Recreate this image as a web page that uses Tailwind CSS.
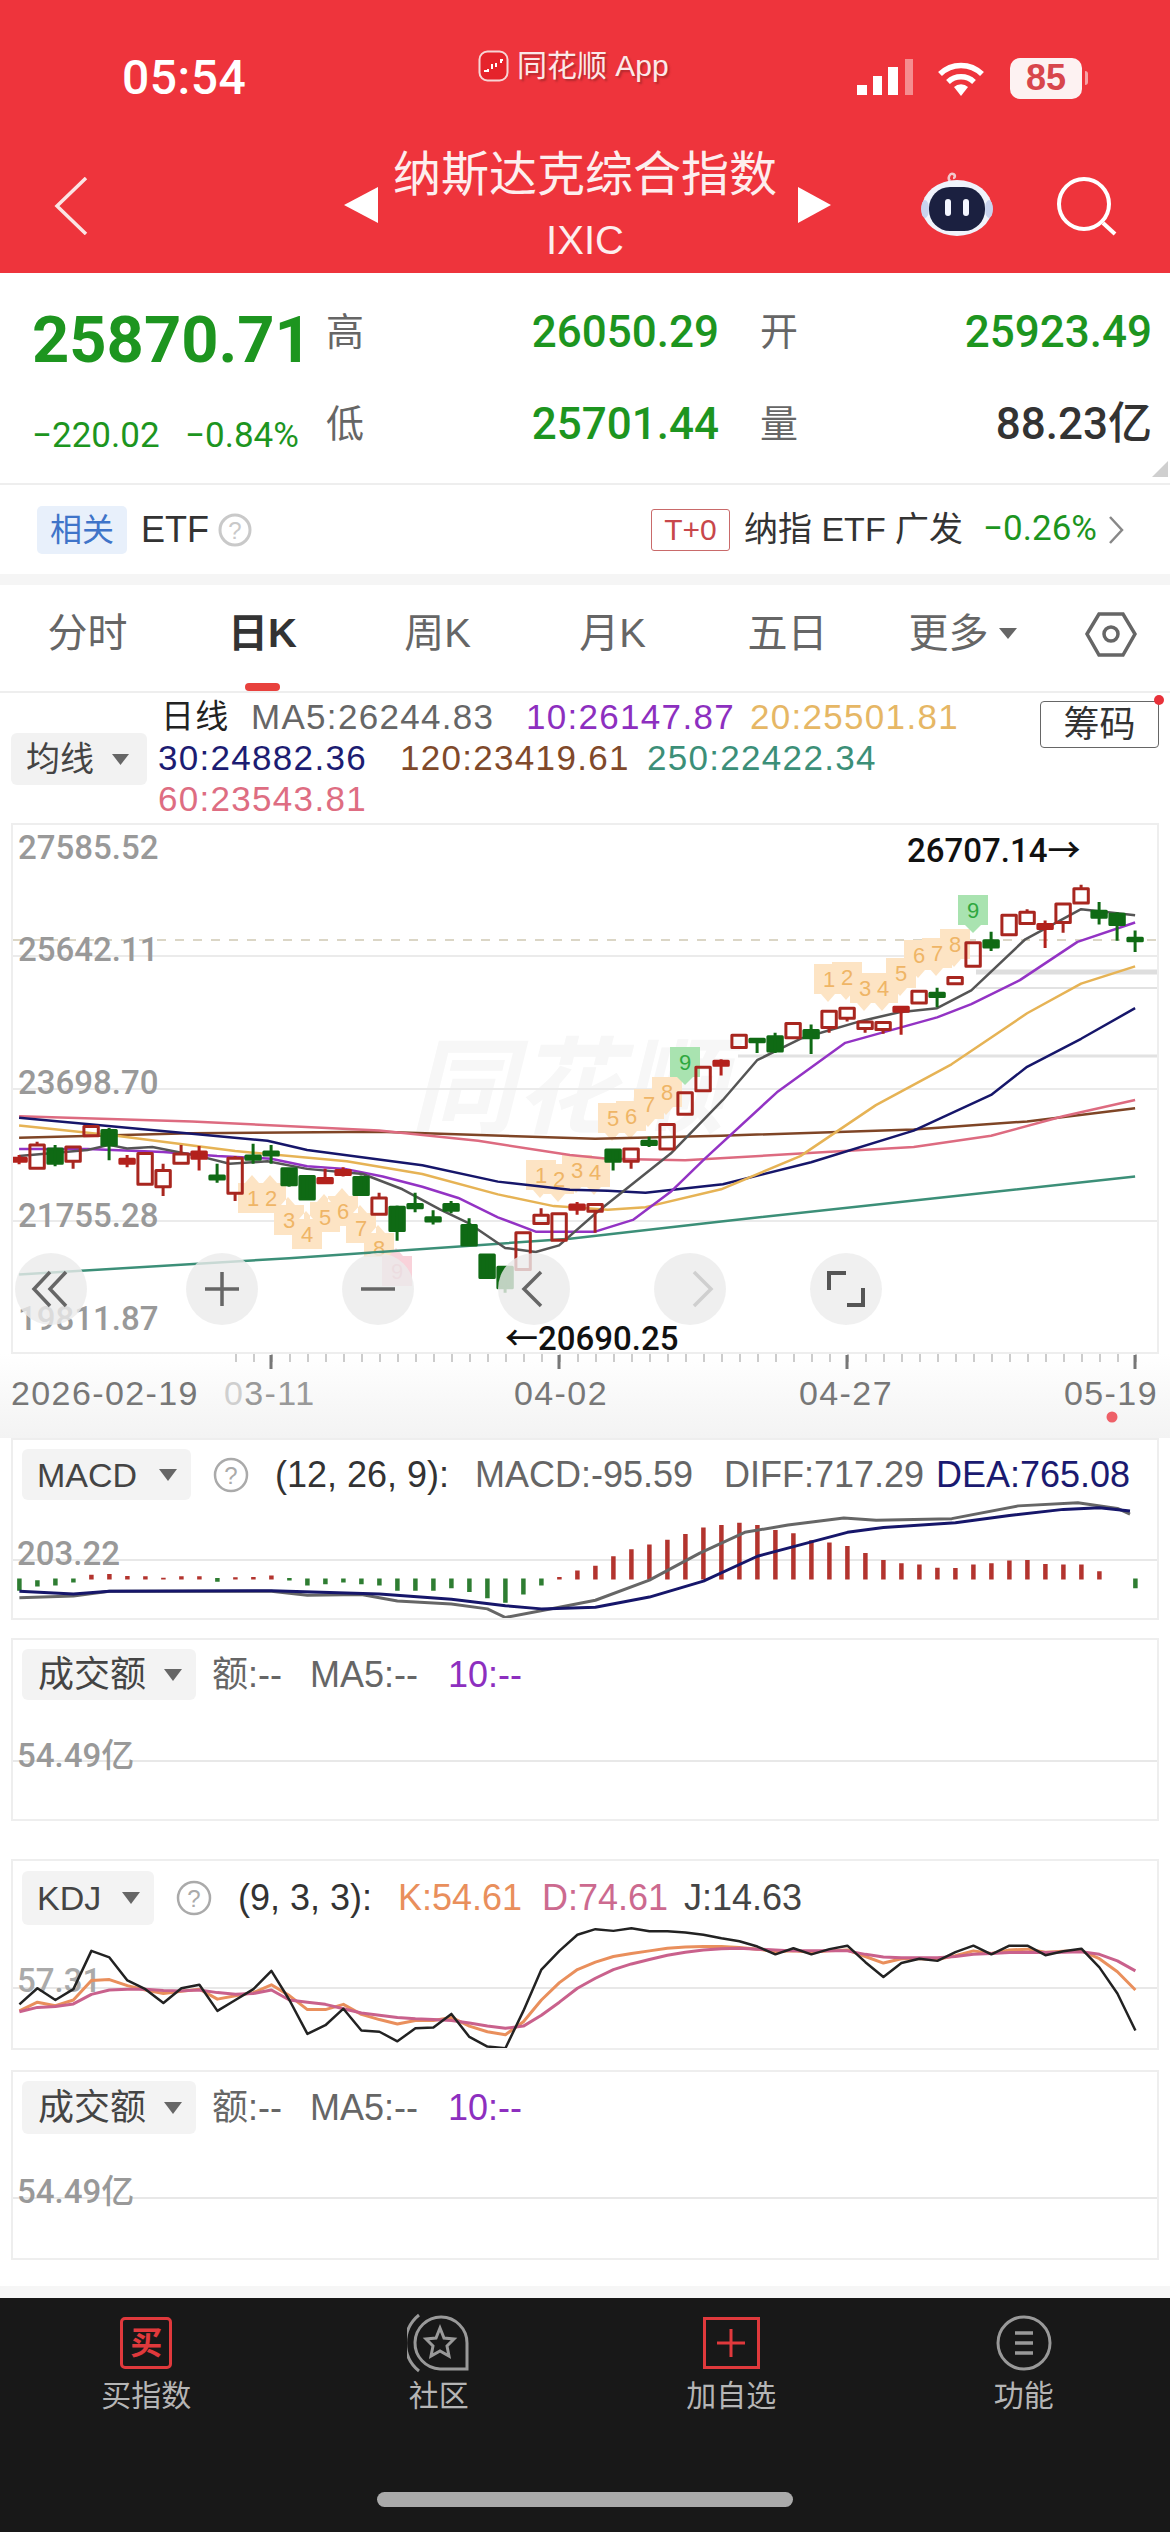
<!DOCTYPE html>
<html lang="zh">
<head>
<meta charset="utf-8">
<title>纳斯达克综合指数</title>
<script src="https://cdn.jsdelivr.net/npm/@tailwindcss/browser@4"></script>
</head>
<body class="bg-white">
<div class="w-[1170px] h-[2532px] overflow-hidden flex flex-col bg-white font-['Liberation_Sans','Noto_Sans_CJK_SC',sans-serif] text-[#333]">

  <!-- red header -->
  <header class="h-[273px] shrink-0 bg-[#ee343c] text-white flex flex-col">
    <div class="h-[116px] pt-[40px] flex items-center pl-[122px]">
      <div class="w-[356px] text-[48px] leading-none font-['Roboto',sans-serif] font-medium tracking-[0.5px]">05:54</div>
      <div class="w-[379px] flex items-center mb-[24px]">
        <svg class="w-[31px] h-[32px]" viewBox="0 0 31 32"><rect x="1.5" y="1.5" width="28" height="29" rx="8" fill="#e5232b" stroke="#f7d5d5" stroke-width="2"/><path d="M6 21h3M10 19v3M14 14v5M18 13v4M23 9v4M25 10h-3" stroke="#fff" stroke-width="2" fill="none"/></svg>
        <span class="ml-[8px] text-[30px] leading-none text-[#fbe9e9] [text-shadow:2px_2px_2px_rgba(110,30,30,0.45)]">同花顺 App</span>
      </div>
      <svg class="w-[60px] h-[40px] mt-[0px]" viewBox="857 58 60 40"><path d="M857 85h10v10h-10zM873 76h9v19h-9zM888 67h10v28h-10z" fill="#fff"/><rect x="905" y="59" width="8" height="36" fill="#f58d90"/></svg>
      <svg class="ml-[20px] w-[48px] h-[37px]" viewBox="0 0 48 37" fill="none" stroke="#fff" stroke-width="5.5"><path d="M3 14A30 30 0 0 1 45 14"/><path d="M11 22A19 19 0 0 1 37 22"/><path d="M24 36L17 27A10 10 0 0 1 31 27Z" fill="#fff" stroke="none"/></svg>
      <div class="ml-[25px] w-[72px] h-[41px] bg-[#fdf2f2] rounded-[10px] flex items-center justify-center text-[#d8464c] text-[36px] leading-none font-bold">85</div>
      <div class="ml-[3px] w-[3px] h-[14px] bg-[#f7a3a6] rounded-r-sm"></div>
    </div>
    <div class="h-[157px] flex items-start pl-[54px]">
      <svg class="mt-[61px] w-[34px] h-[58px]" viewBox="0 0 34 58" fill="none" stroke="#fbe4e4" stroke-width="3.5"><path d="M32 1L3 29L32 57"/></svg>
      <svg class="ml-[256px] mt-[71px] w-[34px] h-[36px]" viewBox="0 0 34 36"><path d="M34 0V36L0 18Z" fill="#fff"/></svg>
      <div class="w-[420px] mt-[30px] flex flex-col items-center pr-[6px]">
        <div class="text-[48px] leading-[58px] text-[#fdeeee] whitespace-nowrap">纳斯达克综合指数</div>
        <div class="mt-[11px] text-[40px] leading-[50px] text-[#fdeeee]">IXIC</div>
      </div>
      <svg class="mt-[71px] w-[33px] h-[36px]" viewBox="0 0 33 36"><path d="M0 0V36L33 18Z" fill="#fff"/></svg>
      <svg class="ml-[90px] mt-[55px] w-[72px] h-[66px]" viewBox="0 0 72 66"><path d="M29 10c-3-3 0-8 3-7 3 1 2 4 0 4" fill="none" stroke="#f2c8cc" stroke-width="2.5"/><ellipse cx="36" cy="37" rx="35" ry="28" fill="#f0f3fb"/><ellipse cx="4" cy="38" rx="4" ry="9" fill="#c9d3ee"/><ellipse cx="68" cy="38" rx="4" ry="9" fill="#c9d3ee"/><rect x="8" y="16" width="56" height="44" rx="21" fill="#1b2040"/><rect x="24" y="28" width="6" height="17" rx="3" fill="#f4f6ff"/><rect x="42" y="28" width="6" height="17" rx="3" fill="#f4f6ff"/></svg>
      <svg class="ml-[64px] mt-[60px] w-[60px] h-[60px]" viewBox="0 0 60 60" fill="none" stroke="#fff" stroke-width="4"><circle cx="27" cy="28" r="25"/><path d="M46 47L58 58"/></svg>
    </div>
  </header>

  <!-- quote -->
  <section class="h-[212px] shrink-0 relative flex border-b-2 border-[#eeeeee] font-['Roboto','Noto_Sans_CJK_SC',sans-serif]">
    <div class="w-[326px] pl-[32px] shrink-0 text-[#1d951f]">
      <div class="mt-[34px] text-[65px] leading-[66px] font-bold whitespace-nowrap">25870.71</div>
      <div class="mt-[43px] text-[35px] leading-[40px] flex whitespace-nowrap">
        <span class="w-[153px]">−220.02</span><span>−0.84%</span>
      </div>
    </div>
    <div class="flex-1">
      <div class="mt-[34px] h-[50px] flex items-center">
        <span class="w-[40px] text-[38px] text-[#666] font-['Liberation_Sans','Noto_Sans_CJK_SC',sans-serif]">高</span>
        <span class="w-[353px] text-right text-[44px] font-medium text-[#1d951f]">26050.29</span>
        <span class="ml-[41px] w-[40px] text-[38px] text-[#666] font-['Liberation_Sans','Noto_Sans_CJK_SC',sans-serif]">开</span>
        <span class="w-[352px] text-right text-[44px] font-medium text-[#1d951f]">25923.49</span>
      </div>
      <div class="mt-[42px] h-[50px] flex items-center">
        <span class="w-[40px] text-[38px] text-[#666] font-['Liberation_Sans','Noto_Sans_CJK_SC',sans-serif]">低</span>
        <span class="w-[353px] text-right text-[44px] font-medium text-[#1d951f]">25701.44</span>
        <span class="ml-[41px] w-[40px] text-[38px] text-[#666] font-['Liberation_Sans','Noto_Sans_CJK_SC',sans-serif]">量</span>
        <span class="w-[352px] text-right text-[44px] font-medium text-[#333]">88.23亿</span>
      </div>
    </div>
    <svg class="absolute right-[2px] bottom-[6px] w-[16px] h-[16px]" viewBox="0 0 16 16"><path d="M16 0V16H0Z" fill="#cfcfcf"/></svg>
  </section>

  <!-- ETF row -->
  <section class="h-[89px] shrink-0 flex items-center pl-[37px] pr-[46px]">
    <div class="w-[90px] h-[48px] bg-[#e8f0fb] rounded-[5px] flex items-center justify-center text-[32px] text-[#3f74c9]">相关</div>
    <span class="ml-[14px] text-[36px] text-[#333]">ETF</span>
    <svg class="ml-[9px] w-[34px] h-[34px]" viewBox="0 0 34 34"><circle cx="17" cy="17" r="15" fill="none" stroke="#c9c9c9" stroke-width="3"/><text x="17" y="26" text-anchor="middle" font-size="24" fill="#c9c9c9">?</text></svg>
    <div class="ml-auto w-[79px] h-[42px] border border-[#c96a6a] rounded-[3px] flex items-center justify-center text-[30px] text-[#c8474b]">T+0</div>
    <span class="ml-[14px] text-[34px] text-[#333] whitespace-nowrap">纳指 ETF 广发</span>
    <span class="ml-[20px] text-[35px] text-[#1d951f] font-['Roboto',sans-serif]">−0.26%</span>
    <svg class="ml-[11px] w-[16px] h-[30px]" viewBox="0 0 16 30" fill="none" stroke="#888" stroke-width="2.5"><path d="M2 2L14 15L2 28"/></svg>
  </section>
  <div class="h-[11px] shrink-0 bg-[#f5f5f5]"></div>

  <!-- tabs -->
  <nav class="h-[108px] shrink-0 flex items-center border-b-2 border-[#eeeeee] relative text-[40px] text-[#666] pb-[10px]">
    <div class="w-[175px] text-center">分时</div>
    <div class="w-[175px] text-center text-[#333] font-bold relative">日K</div>
    <div class="w-[175px] text-center">周K</div>
    <div class="w-[175px] text-center">月K</div>
    <div class="w-[175px] text-center">五日</div>
    <div class="w-[175px] flex items-center justify-center pl-[0px]">更多<svg class="ml-[10px] w-[18px] h-[11px]" viewBox="0 0 18 11"><path d="M0 0H18L9 11Z" fill="#666"/></svg></div>
    <svg class="ml-[35px] w-[52px] h-[45px] mt-[2px]" viewBox="0 0 52 45" fill="none" stroke="#666" stroke-width="3.5"><path d="M2 22L14 2H38L50 22L38 43H14Z"/><circle cx="26" cy="22" r="7"/></svg>
    <div class="absolute left-[245px] bottom-[0px] w-[35px] h-[8px] rounded-full bg-[#e8413d]"></div>
  </nav>

  <!-- legends -->
  <section class="h-[130px] shrink-0 relative flex">
    <div class="ml-[11px] mt-[40px] w-[136px] h-[52px] bg-[#f2f2f2] rounded-md flex items-center pl-[15px] text-[34px] text-[#444]">均线<svg class="ml-[18px] w-[17px] h-[11px]" viewBox="0 0 17 11"><path d="M0 0H17L8.5 11Z" fill="#666"/></svg></div>
    <div class="ml-[11px] text-[35px] leading-[41px] tracking-[1.3px] pt-[3px]">
      <div class="flex whitespace-nowrap">
        <span class="w-[93px] text-[33px] text-[#222] pl-[3px]">日线</span>
        <span class="w-[275px] text-[#666]">MA5:26244.83</span>
        <span class="w-[224px] text-[#8d2fbf]">10:26147.87</span>
        <span class="text-[#e6b765]">20:25501.81</span>
      </div>
      <div class="flex whitespace-nowrap">
        <span class="w-[242px] text-[#1c1c72]">30:24882.36</span>
        <span class="w-[247px] text-[#80492a]">120:23419.61</span>
        <span class="text-[#3c8f78]">250:22422.34</span>
      </div>
      <div class="text-[#de6d82] whitespace-nowrap">60:23543.81</div>
    </div>
    <div class="absolute left-[1040px] top-[8px] w-[119px] h-[47px] border border-[#666] rounded-[4px] flex items-center justify-center text-[36px] text-[#333]">筹码</div>
    <div class="absolute left-[1154px] top-[2px] w-[10px] h-[10px] rounded-full bg-[#e8313a]"></div>
  </section>

  <!-- main chart -->
  <section class="mx-[11px] h-[531px] shrink-0 relative border-2 border-[#eeeeee]">
    <svg class="absolute left-0 top-0 w-[1144px] h-[527px]" viewBox="13 825 1144 527" font-family="Roboto, 'Noto Sans CJK SC', sans-serif" font-weight="500">
      <text x="410" y="1125" font-size="105" font-weight="700" font-style="italic" fill="#f7f7f7">同花顺</text>
      <g stroke="#ebebeb" stroke-width="2"><path d="M13 956H1157M13 1089H1157M13 1221H1157"/></g>
      <path d="M13 940H1157" stroke="#cfc9b4" stroke-width="1.5" stroke-dasharray="9 9"/>
      <path d="M976 972H1157" stroke="#dedede" stroke-width="5"/>
      <path d="M976 988H1157" stroke="#e2e2e2" stroke-width="2"/>
      <path d="M738 1056H1157" stroke="#e2e2e2" stroke-width="3"/>

      <g fill="#999">
        <text x="18" y="859" font-size="33">27585.52</text>
        <text x="18" y="961" font-size="33">25642.11</text>
        <text x="18" y="1094" font-size="33">23698.70</text>
        <text x="18" y="1227" font-size="33">21755.28</text>
        <text x="18" y="1330" font-size="33">19811.87</text>
      </g>

      <!-- sequence badges -->
      <path fill="#fde4c4" d="M238 1183h30v30h-30zM245 1183h14l-7-8zM256 1183h30v30h-30zM263 1183h14l-7-8zM274 1205h30v30h-30zM281 1205h14l-7-8zM292 1219h30v30h-30zM299 1219h14l-7-8zM310 1202h30v30h-30zM317 1202h14l-7-8zM328 1196h30v30h-30zM335 1196h14l-7-8zM346 1213h30v30h-30zM353 1213h14l-7-8zM364 1233h30v24h-30zM371 1233h14l-7-8z"/>
      <path fill="#fde4c4" d="M526 1160h30v30h-30zM533 1190h14l-7 8zM544 1164h30v30h-30zM551 1194h14l-7 8zM562 1155h30v30h-30zM569 1185h14l-7 8zM580 1157h30v30h-30zM587 1187h14l-7 8zM598 1103h30v30h-30zM605 1133h14l-7 8zM616 1101h30v30h-30zM623 1131h14l-7 8zM634 1089h30v30h-30zM641 1119h14l-7 8zM652 1077h30v30h-30zM659 1107h14l-7 8z"/>
      <path fill="#fde4c4" d="M814 964h30v30h-30zM821 994h14l-7 8zM832 962h30v30h-30zM839 992h14l-7 8zM850 973h30v30h-30zM857 1003h14l-7 8zM868 973h30v30h-30zM875 1003h14l-7 8zM886 958h30v30h-30zM893 988h14l-7 8zM904 940h30v30h-30zM911 970h14l-7 8zM922 938h30v30h-30zM929 968h14l-7 8zM940 929h30v30h-30zM947 959h14l-7 8z"/>
      <path fill="#f9d2da" d="M382 1256h30v30h-30zM389 1256h14l-7-8z"/>
      <path fill="#a9e3b0" d="M670 1047h30v30h-30zM677 1077h16l-8 8zM958 895h30v30h-30zM965 925h16l-8 8z"/>
      <g fill="#efb566" font-size="22" text-anchor="middle" font-family="'Liberation Sans', sans-serif" font-weight="400">
        <text x="253" y="1206">1</text><text x="271" y="1206">2</text><text x="289" y="1228">3</text><text x="307" y="1242">4</text><text x="325" y="1225">5</text><text x="343" y="1219">6</text><text x="361" y="1236">7</text><text x="379" y="1256">8</text>
        <text x="541" y="1183">1</text><text x="559" y="1187">2</text><text x="577" y="1178">3</text><text x="595" y="1180">4</text><text x="613" y="1126">5</text><text x="631" y="1124">6</text><text x="649" y="1112">7</text><text x="667" y="1100">8</text>
        <text x="829" y="987">1</text><text x="847" y="985">2</text><text x="865" y="996">3</text><text x="883" y="996">4</text><text x="901" y="981">5</text><text x="919" y="963">6</text><text x="937" y="961">7</text><text x="955" y="952">8</text>
        <text x="397" y="1279" fill="#ee9fb0">9</text><text x="685" y="1070" fill="#2fa83f">9</text><text x="973" y="918" fill="#2fa83f">9</text>
      </g>

      <g transform="translate(19.1 600) scale(18 .5102)" fill="none" stroke-linejoin="round">
        <polyline vector-effect="non-scaling-stroke" stroke="#3c8f78" stroke-width="2.5" points="0,1322 15,1290 30.6,1252 39,1218 51,1172 62,1130"/>
        <polyline vector-effect="non-scaling-stroke" stroke="#7f4526" stroke-width="2.5" points="0,1054 9.5,1045 20,1042 32,1056 39,1050 49.7,1038 56,1022 62,996"/>
        <polyline vector-effect="non-scaling-stroke" stroke="#dd6b80" stroke-width="2.5" points="0,1012 9.6,1022 20,1040 25.5,1060 30.6,1088 32.7,1095 37,1098 43.4,1085 49.7,1072 54,1050 58,1012 62,980"/>
        <polyline vector-effect="non-scaling-stroke" stroke="#16166a" stroke-width="2.5" points="0,1015 9.6,1046 13.8,1060 16,1078 22.4,1108 26.6,1140 30.6,1156 32.7,1158 34.8,1162 39.1,1145 44,1102 49.7,1040 54,970 56,915 59,860 62,800"/>
        <polyline vector-effect="non-scaling-stroke" stroke="#e6b355" stroke-width="2.5" points="0,1030 5.4,1050 12,1080 18.2,1100 22.4,1125 26.6,1165 29.7,1188 32.7,1195 34.8,1190 39,1155 43.4,1090 45.5,1040 47.6,990 51.8,910 56,810 59,752 62,718"/>
        <polyline vector-effect="non-scaling-stroke" stroke="#9333c4" stroke-width="2.5" points="0,1076 3.8,1076 8,1082 11,1090 14,1095 16,1110 18.1,1115 20.2,1130 22.4,1150 24.4,1172 26.6,1210 28.7,1238 32,1238 34.1,1215 36.2,1160 38.1,1095 42.1,965 45.9,868 51,818 52.9,792 55.6,745 58.8,670 62,632"/>
        <polyline vector-effect="non-scaling-stroke" stroke="#555" stroke-width="2.5" points="0,1090 3.8,1078 5,1068 6,1075 7.4,1072 10,1090 11.7,1105 13.8,1100 16,1115 19.1,1125 21.3,1155 23.4,1195 25,1222 27,1270 28.7,1278 30,1265 32.1,1200 36.2,1085 39.1,980 41,902 43.4,860 46.8,825 48.9,808 51,800 52.9,765 55.9,665 59,606 62,618"/>

        <!-- hollow red candles -->
        <path vector-effect="non-scaling-stroke" stroke="#a8261f" stroke-width="3" d="M1 1062V1068M.6 1068H1.4V1114H.6ZM2.6 1072H3.4V1100H2.6ZM3 1100V1115M3.6 1032H4.4V1050H3.6ZM6.6 1085H7.4V1145H6.6ZM8 1105V1118M7.6 1118H8.4V1150H7.6ZM8 1150V1168M9 1068V1086M8.6 1086H9.4V1104H8.6ZM12 1090V1094M11.6 1094H12.4V1163H11.6ZM12 1163V1178M20 1162V1172M19.6 1172H20.4V1204H19.6ZM27.6 1240H28.4V1312H27.6ZM29 1192V1206M28.6 1206H29.4V1222H28.6ZM29.6 1203H30.4V1255H29.6ZM31.6 1185H32.4V1198H31.6ZM32 1198V1240M33.6 1076H34.4V1100H33.6ZM34 1100V1115M35.6 1028H36.4V1076H35.6ZM36.6 966H37.4V1008H36.6ZM37.6 916H38.4V962H37.6ZM39.6 853H40.4V877H39.6ZM42.6 830H43.4V858H42.6ZM44.6 806H45.4V838H44.6ZM45 838V848M45.6 800H46.4V820H45.6ZM46 820V826M46.6 827H47.4V840H46.6ZM47 840V848M47.6 828H48.4V842H47.6ZM48 842V850M49.6 767H50.4V790H49.6ZM51.6 740H52.4V752H51.6ZM52.6 672H53.4V718H52.6ZM54.6 618H55.4V656H54.6ZM55.6 612H56.4V634H55.6ZM56 606V612M57.6 596H58.4V632H57.6ZM58 632V652M58.6 566H59.4V594H58.6ZM59 558V566"/>
        <!-- filled red -->
        <path vector-effect="non-scaling-stroke" stroke="#b3211c" stroke-width="3" fill="#b3211c" d="M0 1088V1106M-.4 1094H.4V1100H-.4ZM10 1070V1118M9.6 1082H10.4V1094H9.6ZM6 1088V1112M5.6 1096H6.4V1104H5.6ZM17 1115V1145M16.6 1134H17.4V1142H16.6ZM18 1112V1130M17.6 1118H18.4V1126H17.6ZM31 1180V1205M30.6 1186H31.4V1194H30.6ZM39 900V932M38.6 904H39.4V912H38.6ZM49 796V852M48.6 798H49.4V806H48.6ZM57 628V682M56.6 636H57.4V644H56.6Z"/>
        <!-- green -->
        <path vector-effect="non-scaling-stroke" stroke="#0f6a14" stroke-width="3" fill="#0f6a14" d="M2 1068V1110M1.6 1076H2.4V1104H1.6ZM5 1035V1098M4.6 1040H5.4V1068H4.6ZM15 1112V1150M14.6 1115H15.4V1146H14.6ZM16 1128V1176M15.6 1130H16.4V1174H15.6ZM19 1128V1168M18.6 1132H19.4V1165H18.6ZM21 1187V1256M20.6 1190H21.4V1236H20.6ZM24 1178V1202M23.6 1185H24.4V1196H23.6ZM25 1212V1265M24.6 1226H25.4V1264H24.6ZM26 1282V1330M25.6 1284H26.4V1328H25.6ZM27 1305V1358M26.6 1308H27.4V1348H26.6ZM33 1076V1118M32.6 1078H33.4V1100H32.6ZM42 848V888M41.6 856H42.4V884H41.6ZM44 832V890M43.6 844H44.4V858H43.6ZM60 592V636M59.6 610H60.4V622H59.6ZM61 612V668M60.6 616H61.4V636H60.6ZM11 1105V1142M10.6 1129H11.4V1135H10.6ZM13 1066V1105M12.6 1090H13.4V1096H12.6ZM14 1068V1105M13.6 1082H14.4V1088H13.6ZM22 1162V1200M21.6 1185H22.4V1191H21.6ZM23 1196V1224M22.6 1211H23.4V1217H22.6ZM35 1052V1072M34.6 1061H35.4V1067H34.6ZM41 860V888M40.6 861H41.4V866H40.6ZM51 760V798M50.6 771H51.4V777H50.6ZM54 650V688M53.6 668H54.4V680H53.6ZM62 648V690M61.6 663H62.4V668H61.6Z"/>
      </g>

      <!-- floating buttons -->
      <g fill="#ececec" opacity=".8"><circle cx="51" cy="1289" r="36"/><circle cx="222" cy="1289" r="36"/><circle cx="378" cy="1289" r="36"/><circle cx="534" cy="1289" r="36"/><circle cx="690" cy="1289" r="36"/><circle cx="846" cy="1289" r="36"/></g>
      <g fill="none" stroke="#666" stroke-width="3.5">
        <path d="M50 1272L34 1289L50 1306M66 1272L50 1289L66 1306"/>
        <path d="M205 1289H239M222 1272V1306"/>
        <path d="M361 1289H395"/>
        <path d="M541 1272L524 1289L541 1306"/>
        <path d="M694 1272L711 1289L694 1306" stroke="#cfcfcf"/>
        <path d="M829 1290V1273H846M863 1288V1305H847" stroke="#555" stroke-width="4"/>
      </g>
      <g fill="#111" font-size="33">
        <text x="907" y="862">26707.14→</text>
        <text x="505" y="1350">←20690.25</text>
      </g>
    </svg>
  </section>

  <!-- date axis -->
  <section class="h-[84px] shrink-0 relative bg-gradient-to-b from-white to-[#f3f3f3]">
    <svg class="absolute left-0 top-0 w-[1170px] h-[84px]" viewBox="0 1354 1170 84" font-family="'Liberation Sans', sans-serif">
      <path d="M235 1358H1137" stroke="#cccccc" stroke-width="8" stroke-dasharray="2 16"/>
      <path d="M271 1355V1369M559 1355V1369M847 1355V1369M1135 1355V1369" stroke="#777" stroke-width="3"/>
      <g fill="#777" font-size="34" letter-spacing="1.4">
        <text x="11" y="1405">2026-02-19</text>
        <text x="224" y="1405"><tspan fill="#cfcfcf">0</tspan><tspan fill="#999">3-11</tspan></text>
        <text x="514" y="1405">04-02</text>
        <text x="799" y="1405">04-27</text>
        <text x="1064" y="1405">05-19</text>
      </g>
      <circle cx="1112" cy="1417" r="5.5" fill="#ee6068"/>
    </svg>
  </section>

  <!-- MACD -->
  <section class="mx-[11px] h-[182px] shrink-0 relative border-2 border-[#eeeeee]">
    <svg class="absolute left-0 top-0 w-[1144px] h-[178px]" viewBox="13 1440 1144 178" font-family="Roboto, sans-serif">
      <path d="M13 1560H1157" stroke="#e8e8e8" stroke-width="2"/>
      <text x="17" y="1565" font-size="33" font-weight="500" fill="#999">203.22</text>
      <g transform="translate(19.4 1400) scale(18 .3189)" fill="none">
        <path vector-effect="non-scaling-stroke" stroke="#2e7d32" stroke-width="4.5" d="M0 560V598M1 565V585M2 560V582M3 560V572M11 558V570M15 558V566M16 560V582M17 560V578M18 560V572M19 560V578M20 560V582M21 560V598M22 560V598M23 560V598M24 560V590M25 560V602M26 560V622M27 560V636M28 560V610M29 560V582M62 560V590"/>
        <path vector-effect="non-scaling-stroke" stroke="#b3342e" stroke-width="4.5" d="M4 548V563M5 546V563M6 552V563M7 553V563M8 557V563M9 553V563M10 553V563M12 556V563M13 555V563M14 550V563M30 555V563M31 535V563M32 520V563M33 490V563M34 468V563M35 453V563M36 438V563M37 420V563M38 400V563M39 392V563M40 385V563M41 392V563M42 408V563M43 418V563M44 440V563M45 447V563M46 458V563M47 480V563M48 502V563M49 512V563M50 516V563M51 526V563M52 527V563M53 516V563M54 512V563M55 503V563M56 502V563M57 514V563M58 516V563M59 516V563M60 537V563"/>
        <polyline vector-effect="non-scaling-stroke" stroke="#666" stroke-width="3" stroke-linejoin="round" points="0,620 3,615 5,600 14,600 16,612 19,610 21,630 24,640 26,655 27,682 30,650 32,628 35,565 37.8,480 40.3,415 42.7,392 45.8,370 47.6,377 51.8,372 55.5,332 58.8,322 61,340 61.7,358"/>
        <polyline vector-effect="non-scaling-stroke" stroke="#16166a" stroke-width="3" stroke-linejoin="round" points="0,600 3,608 5,600 14,598 20,608 24,625 27,645 29,655 32,650 35,618 38,568 41,490 44,445 46,415 48,400 52,385 55,362 58,343 60,338 61.7,348"/>
      </g>
    </svg>
    <div class="relative flex items-center pl-[9px] pt-[9px] text-[36px] leading-none whitespace-nowrap">
      <div class="w-[169px] h-[51px] bg-[#f3f3f3] rounded-md flex items-center pl-[15px] pr-[14px] text-[34px] text-[#444]">MACD<svg class="ml-auto w-[18px] h-[12px]" viewBox="0 0 18 12"><path d="M0 0H18L9 12Z" fill="#666"/></svg></div>
      <svg class="ml-[22px] w-[36px] h-[36px]" viewBox="0 0 36 36"><circle cx="18" cy="18" r="16" fill="none" stroke="#aaa" stroke-width="2.5"/><text x="18" y="27" text-anchor="middle" font-size="24" fill="#aaa">?</text></svg>
      <span class="ml-[26px] w-[200px] text-[#333]">(12, 26, 9):</span>
      <span class="w-[249px] text-[#666]">MACD:-95.59</span>
      <span class="w-[212px] text-[#666]">DIFF:717.29</span>
      <span class="text-[#1a1a70]">DEA:765.08</span>
    </div>
  </section>

  <!-- volume 1 -->
  <section class="mx-[11px] mt-[18px] h-[183px] shrink-0 relative border-2 border-[#eeeeee]">
    <svg class="absolute left-0 top-0 w-[1144px] h-[179px]" viewBox="13 1640 1144 179" font-family="Roboto, 'Noto Sans CJK SC', sans-serif">
      <path d="M13 1761H1157" stroke="#e8e8e8" stroke-width="2"/>
      <text x="17" y="1767" font-size="33" font-weight="500" fill="#999">54.49亿</text>
    </svg>
    <div class="relative flex items-center pl-[9px] pt-[9px] text-[36px] leading-none whitespace-nowrap">
      <div class="w-[174px] h-[51px] bg-[#f3f3f3] rounded-md flex items-center pl-[16px] pr-[14px] text-[36px] text-[#444]">成交额<svg class="ml-auto w-[18px] h-[12px]" viewBox="0 0 18 12"><path d="M0 0H18L9 12Z" fill="#666"/></svg></div>
      <span class="ml-[16px] w-[98px] text-[#666]">额:--</span>
      <span class="w-[138px] text-[#666]">MA5:--</span>
      <span class="text-[#8d2fbf]">10:--</span>
    </div>
  </section>

  <!-- KDJ -->
  <section class="mx-[11px] mt-[38px] h-[191px] shrink-0 relative border-2 border-[#eeeeee]">
    <svg class="absolute left-0 top-0 w-[1144px] h-[187px]" viewBox="13 1861 1144 187" font-family="Roboto, sans-serif">
      <path d="M13 1988H1157" stroke="#e8e8e8" stroke-width="2"/>
      <text x="17" y="1992" font-size="33" font-weight="500" fill="#aaa">57.31</text>
      <g transform="translate(19.4 1850) scale(18 .4348)" fill="none" stroke-linejoin="round">
        <polyline vector-effect="non-scaling-stroke" stroke="#e98f5c" stroke-width="3" points="0,370 1,350 2,358 3,345 4,300 5,298 6,312 7,322 8,330 9,325 10,320 11,343 12,335 13,328 14,310 15,335 16,367 17,367 18,355 19,378 20,390 21,400 22,392 23,392 24,385 25,405 26,418 27,425 28,395 29,345 30,305 31,275 32,258 33,245 34,238 35,232 36,226 37,223 38,222 39,222 40,224 41,228 42,234 43,232 44,235 45,232 46,230 47,245 48,260 49,250 50,250 51,252 52,243 53,232 54,238 55,230 56,228 57,235 58,233 59,232 60,250 61,280 62,322"/>
        <polyline vector-effect="non-scaling-stroke" stroke="#c9618c" stroke-width="3" points="0,372 1,362 2,360 3,354 4,332 5,322 6,320 7,320 8,323 9,324 10,322 11,328 12,332 13,330 14,322 15,345 16,350 17,355 18,365 19,375 20,380 21,385 22,388 23,390 24,392 25,398 26,405 27,410 28,405 29,380 30,350 31,318 32,295 33,275 34,262 35,252 36,242 37,235 38,230 39,227 40,226 41,228 42,230 43,232 44,232 45,232 46,232 47,240 48,246 49,248 50,248 51,248 52,245 53,240 54,238 55,236 56,235 57,236 58,235 59,234 60,240 61,255 62,278"/>
        <polyline vector-effect="non-scaling-stroke" stroke="#222" stroke-width="2.5" points="0,355 1,318 2,345 3,320 4,232 5,247 6,300 7,320 8,352 9,318 10,310 11,370 12,345 13,320 14,278 15,345 16,423 17,403 18,365 19,415 20,418 21,440 22,410 23,408 24,377 25,430 26,452 27,456 28,370 29,275 30,232 31,195 32,182 33,186 34,180 35,187 36,187 37,190 38,195 39,203 40,210 41,222 42,240 43,226 44,240 45,228 46,220 47,258 48,292 49,260 50,250 51,255 52,235 53,220 54,240 55,220 56,220 57,242 58,233 59,227 60,270 61,330 62,415"/>
      </g>
    </svg>
    <div class="relative flex items-center pl-[9px] pt-[10px] text-[36px] leading-none whitespace-nowrap">
      <div class="w-[132px] h-[54px] bg-[#f3f3f3] rounded-md flex items-center pl-[15px] pr-[14px] text-[34px] text-[#444]">KDJ<svg class="ml-auto w-[18px] h-[12px]" viewBox="0 0 18 12"><path d="M0 0H18L9 12Z" fill="#666"/></svg></div>
      <svg class="ml-[22px] w-[36px] h-[36px]" viewBox="0 0 36 36"><circle cx="18" cy="18" r="16" fill="none" stroke="#aaa" stroke-width="2.5"/><text x="18" y="27" text-anchor="middle" font-size="24" fill="#aaa">?</text></svg>
      <span class="ml-[26px] w-[160px] text-[#333]">(9, 3, 3):</span>
      <span class="w-[144px] text-[#e98f5c]">K:54.61</span>
      <span class="w-[142px] text-[#cc6a8f]">D:74.61</span>
      <span class="text-[#444]">J:14.63</span>
    </div>
  </section>

  <!-- volume 2 -->
  <section class="mx-[11px] mt-[20px] h-[190px] shrink-0 relative border-2 border-[#eeeeee]">
    <svg class="absolute left-0 top-0 w-[1144px] h-[186px]" viewBox="13 2072 1144 186" font-family="Roboto, 'Noto Sans CJK SC', sans-serif">
      <path d="M13 2198H1157" stroke="#e8e8e8" stroke-width="2"/>
      <text x="17" y="2203" font-size="33" font-weight="500" fill="#999">54.49亿</text>
    </svg>
    <div class="relative flex items-center pl-[9px] pt-[9px] text-[36px] leading-none whitespace-nowrap">
      <div class="w-[174px] h-[53px] bg-[#f3f3f3] rounded-md flex items-center pl-[16px] pr-[14px] text-[36px] text-[#444]">成交额<svg class="ml-auto w-[18px] h-[12px]" viewBox="0 0 18 12"><path d="M0 0H18L9 12Z" fill="#666"/></svg></div>
      <span class="ml-[16px] w-[98px] text-[#666]">额:--</span>
      <span class="w-[138px] text-[#666]">MA5:--</span>
      <span class="text-[#8d2fbf]">10:--</span>
    </div>
  </section>

  <div class="h-[26px] shrink-0"></div>
  <div class="h-[12px] shrink-0 bg-[#f6f6f6]"></div>

  <!-- bottom nav -->
  <footer class="h-[234px] shrink-0 bg-[#181818] relative">
    <div class="grid grid-cols-4 text-[30px] text-[#b5b5b5]">
      <div class="flex flex-col items-center pt-[19px]">
        <div class="w-[52px] h-[52px] border-[3px] border-[#e0393c] rounded-[5px] flex items-center justify-center text-[32px] leading-none font-bold text-[#e0393c]">买</div>
        <div class="mt-[9px] leading-[36px]">买指数</div>
      </div>
      <div class="flex flex-col items-center pt-[15px]">
        <svg class="w-[64px] h-[60px] mb-[-4px]" viewBox="0 0 64 60" fill="none" stroke="#999" stroke-width="3"><path d="M12 2A36 36 0 0 0 12 58"/><path d="M60 56H33A26 26 0 1 1 60 30Z"/><path d="M33 15L37 25L47 26L40 33L42 43L33 38L24 43L26 33L19 26L29 25Z"/></svg>
        <div class="mt-[9px] leading-[36px]">社区</div>
      </div>
      <div class="flex flex-col items-center pt-[19px]">
        <div class="w-[57px] h-[52px] border-[3px] border-[#e0393c] flex items-center justify-center">
          <svg class="w-[28px] h-[28px]" viewBox="0 0 28 28" fill="none" stroke="#e0393c" stroke-width="3"><path d="M0 14H28M14 0V28"/></svg>
        </div>
        <div class="mt-[9px] leading-[36px]">加自选</div>
      </div>
      <div class="flex flex-col items-center pt-[17px]">
        <svg class="w-[56px] h-[56px]" viewBox="0 0 56 56" fill="none" stroke="#999" stroke-width="3"><circle cx="28" cy="28" r="26"/><path d="M19 18H37M19 28H37M19 38H37" stroke-width="3.5"/></svg>
        <div class="mt-[7px] leading-[36px]">功能</div>
      </div>
    </div>
    <div class="absolute left-[377px] top-[194px] w-[416px] h-[15px] rounded-full bg-[#aaaaaa]"></div>
  </footer>
</div>
</body>
</html>
